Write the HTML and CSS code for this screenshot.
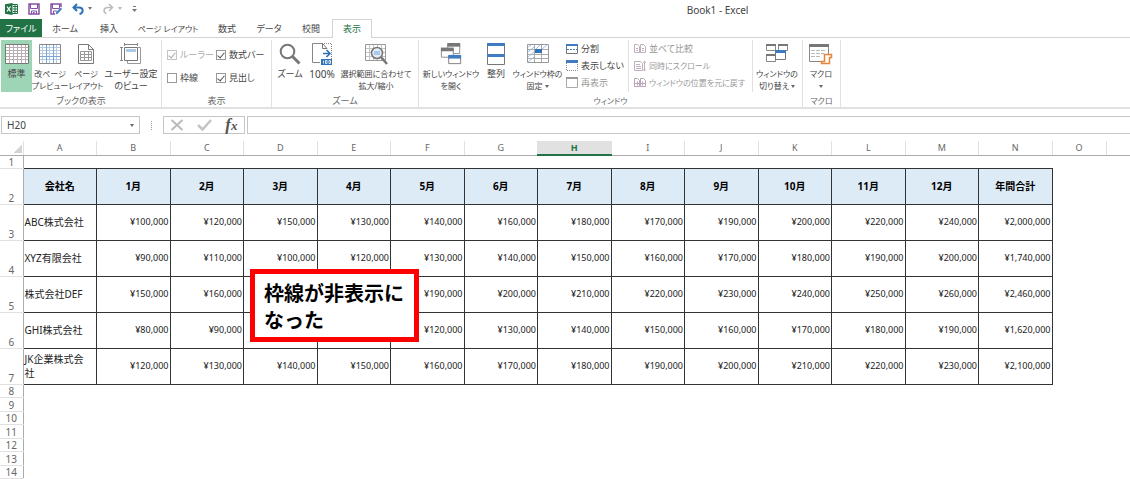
FILE: index.html
```
<!DOCTYPE html>
<html lang="ja">
<head>
    <meta charset="UTF-8">
    <meta name="viewport" content="width=device-width, initial-scale=1.0">
    <title>Book1 - Excel</title>
    <link rel="stylesheet" href="styles.css">
</head>
<body>
    <header class="titlebar">
        <div class="quick-access">
            <button type="button" class="qa-btn" aria-label="Excel">
                <svg width="13" height="12" viewBox="0 0 13 12"><path d="M6 1.500h6.500v9H6z" fill="#fff" stroke="#217346"/><path d="M8 3.500h4M8 6h4M8 8.500h4M10 2v8" stroke="#217346"/><path d="M0 1.200 7.500 0v12L0 10.800z" fill="#217346"/><path d="m2 3.500 3.500 5M5.500 3.500 2 8.500" stroke="#fff" stroke-width="1.300"/></svg>
            </button>
            <button type="button" class="qa-btn" aria-label="上書き保存">
                <svg width="12" height="12" viewBox="0 0 12 12"><path d="M1 1h10v10H1z" fill="#fff" stroke="#8650a5" stroke-width="1.500"/><path d="M2.500 1v4.500h7V1M3.500 11V8h5v3" fill="none" stroke="#8650a5"/><path d="M5 9h1.500v2H5z" fill="#8650a5"/></svg>
            </button>
            <button type="button" class="qa-btn" aria-label="名前を付けて保存">
                <svg width="12" height="12" viewBox="0 0 12 12"><path d="M11 4V1H1v10h4" fill="#fff" stroke="#8650a5" stroke-width="1.500"/><path d="M2.500 1v4.500h7V1M3.500 11V8H7" fill="none" stroke="#8650a5"/><path d="m5.500 11.500.8-2.500L11 4.500 12 6l-4.300 4.700z" fill="#3f7dc0"/></svg>
            </button>
            <button type="button" class="qa-btn undo" aria-label="元に戻す">
                <svg width="20" height="12" viewBox="0 0 20 12"><path d="M5 1 1.500 4.500 5 8M2 4.500h5c5 0 4.500 5.500.500 6.500" fill="none" stroke="#2f72b8" stroke-width="2"/><path d="M16 4h4l-2 3z" fill="#777"/></svg>
            </button>
            <button type="button" class="qa-btn redo" aria-label="やり直し">
                <svg width="20" height="12" viewBox="0 0 20 12"><path d="M7 1l3.500 3.500L7 8M10 4.500H6c-5 0-5 5-1.500 6" fill="none" stroke="#bbb" stroke-width="1.500"/><path d="M16 4h4l-2 3z" fill="#bbb"/></svg>
            </button>
            <button type="button" class="qa-btn more" aria-label="カスタマイズ">
                <svg width="5" height="6" viewBox="0 0 5 6"><path d="M1 .500h3" stroke="#777"/><path d="M0 3h5L2.500 6z" fill="#777"/></svg>
            </button>
        </div>
        <h1 class="book-title">Book1 - Excel</h1>
    </header>

    <nav class="tabs">
        <a href="#" class="tab file">ファイル</a>
        <a href="#" class="tab">ホーム</a>
        <a href="#" class="tab">挿入</a>
        <a href="#" class="tab wide tight">ページ レイアウト</a>
        <a href="#" class="tab">数式</a>
        <a href="#" class="tab">データ</a>
        <a href="#" class="tab">校閲</a>
        <a href="#" class="tab active">表示</a>
    </nav>

    <div class="ribbon">
        <section class="group views">
            <div class="tools">
                <button type="button" class="big selected">
                    <svg width="24" height="22" viewBox="0 0 24 22"><path d="M.500 1.500h23v19H.500z" fill="#fff" stroke="#777"/><path d="M4.500 2v18M8.500 2v18M12.500 2v18M16.500 2v18M20.500 2v18" stroke="#b9adb2"/><path d="M1 4.500h22M1 7.500h22M1 10.500h22M1 13.500h22M1 16.500h22" stroke="#b9adb2"/></svg>
                    <span>標準</span>
                </button>
                <button type="button" class="big tight">
                    <svg width="22" height="22" viewBox="0 0 22 22"><path d="M.500 1.500h21v19H.500z" fill="#fff" stroke="#888"/><path d="M3.500 2v18M10.500 2v18M17.500 2v18M1 4.500h20M1 7.500h20M1 10.500h20M1 16.500h20" stroke="#b4cbe5"/><path d="M7.500 2v18M14.500 2v18M1 13.500h20" stroke="#7ba6d6"/></svg>
                    <span>改ページ<br>プレビュー</span>
                </button>
                <button type="button" class="big tight">
                    <svg width="18" height="22" viewBox="0 0 18 22"><path d="M1.500 1.500h10l5 5v14h-15z" fill="#fff" stroke="#777"/><path d="M11.500 1.500v5h5" fill="none" stroke="#777"/><path d="M3.500 8.500h11v9h-11zM3.500 11.500h11M3.500 14.500h11M7.500 8.500v9M11.500 8.500v9" fill="none" stroke="#999"/></svg>
                    <span>ページ<br>レイアウト</span>
                </button>
                <button type="button" class="big wide">
                    <svg width="22" height="22" viewBox="0 0 22 22"><path d="M7.500 18v2.500h13v-16H18" fill="none" stroke="#999"/><path d="M4.500 4.500h13v13h-13z" fill="#fff" stroke="#777"/><path d="M6 6h10v3H6z" fill="#a9c8ea"/><path d="M4 1.500h14M4.500 0v3M17.500 0v3M1.500 4v14M0 4.500h3M0 17.500h3" stroke="#888"/></svg>
                    <span>ユーザー設定<br>のビュー</span>
                </button>
            </div>
            <h2 class="group-name">ブックの表示</h2>
        </section>

        <section class="group show">
            <div class="tools checks">
                <label class="check disabled"><input type="checkbox" checked disabled>ルーラー</label>
                <label class="check"><input type="checkbox" checked>数式バー</label>
                <label class="check"><input type="checkbox">枠線</label>
                <label class="check"><input type="checkbox" checked>見出し</label>
            </div>
            <h2 class="group-name">表示</h2>
        </section>

        <section class="group zoom">
            <div class="tools">
                <button type="button" class="big">
                    <svg width="22" height="22" viewBox="0 0 22 22"><circle cx="8.500" cy="8.500" r="6.800" fill="#fff" stroke="#777" stroke-width="2"/><path d="m13.500 13.500 7 7" stroke="#777" stroke-width="3"/></svg>
                    <span>ズーム</span>
                </button>
                <button type="button" class="big percent">
                    <svg width="20" height="22" viewBox="0 0 20 22"><path d="M10 .500H.500v19H8" fill="none" stroke="#888"/><path d="M10.500 0v5.500H15l-4.500-5" fill="none" stroke="#777"/><path d="M12 .500h7.500V16" fill="none" stroke="#888" stroke-dasharray="1 1"/><path d="M11 10.500h6M14.500 7l3.500 3.500-3.500 3.500" fill="none" stroke="#2f72b8" stroke-width="1.600"/><path d="M9 16h11v6H9z" fill="#2f72b8"/><path d="M11.500 17.500v3M13.500 17.500h1.500v3h-1.500zM17 17.500h1.500v3H17z" fill="none" stroke="#fff" stroke-width=".800"/></svg>
                    <span>100%</span>
                </button>
                <button type="button" class="big wide tight">
                    <svg width="24" height="22" viewBox="0 0 24 22"><path d="M1.500 1.500h20v16h-20z" fill="#fff" stroke="#999"/><path d="M5.500 2v15M9.500 2v15M13.500 2v15M17.500 2v15M2 5.500h19M2 9.500h19M2 13.500h19" stroke="#c4c4c4"/><circle cx="13" cy="10" r="5.500" fill="#e4eefa" stroke="#777" stroke-width="1.600"/><path d="M10 8h6v4h-6z" fill="#a9c8ea"/><path d="m17 14 6 7" stroke="#777" stroke-width="2.500"/></svg>
                    <span>選択範囲に合わせて<br>拡大/縮小</span>
                </button>
            </div>
            <h2 class="group-name">ズーム</h2>
        </section>

        <section class="group window">
            <div class="tools">
                <button type="button" class="big new-window tight">
                    <svg width="22" height="22" viewBox="0 0 22 24"><path d="M7.500 1.500h13v10h-13z" fill="#fff" stroke="#888"/><path d="M7 0h14v4H7z" fill="#777"/><path d="M.500 6.500h13v9H.500z" fill="#fff" stroke="#888"/><path d="M0 5h14v4H0z" fill="#777"/><path d="M8.500 14.500h13v8h-13z" fill="#fff" stroke="#777"/><path d="M8 13h14v4H8z" fill="#3f7dc0"/></svg>
                    <span>新しいウィンドウ<br>を開く</span>
                </button>
                <button type="button" class="big arrange">
                    <svg width="18" height="22" viewBox="0 0 18 22"><path d="M.500.500h17v21H.500z" fill="#fff" stroke="#777"/><path d="M0 0h18v3H0zM0 11h18v3H0z" fill="#3f7dc0"/></svg>
                    <span>整列</span>
                </button>
                <button type="button" class="big freeze tight">
                    <svg width="22" height="22" viewBox="0 0 22 22"><path d="M.500 1.500h21v18H.500z" fill="#fff" stroke="#999"/><path d="M7.500 2v17M14.500 2v17M1 6.500h20M1 11.500h20M1 15.500h20" stroke="#aaa"/><path d="m1 4 3-2M1 9l6-5M1 14l6-5M1 19l6-5M9 6l4-4M15 6l5-4" stroke="#9fc0e5"/><path d="M8 6h7v4H8z" fill="#2f72b8"/></svg>
                    <span>ウィンドウ枠の<br>固定 <i class="caret"></i></span>
                </button>
                <div class="small-list">
                    <button type="button" class="small">
                        <svg width="12" height="10" viewBox="0 0 12 10"><path d="M.500.500h11v9H.500z" fill="#fff" stroke="#777"/><path d="M0 0h12v2H0z" fill="#3f7dc0"/><path d="M1 5.500h10" stroke="#3f7dc0" stroke-dasharray="2 1"/></svg>
                        分割
                    </button>
                    <button type="button" class="small">
                        <svg width="12" height="11" viewBox="0 0 12 11"><path d="M.500 1v9.500h11V1" fill="none" stroke="#888" stroke-dasharray="1 1"/><path d="M0 0h12v3H0z" fill="#3f7dc0"/></svg>
                        表示しない
                    </button>
                    <button type="button" class="small" disabled>
                        <svg width="12" height="11" viewBox="0 0 12 11"><path d="M.500.500h11v10H.500z" fill="#fff" stroke="#aaa"/><path d="M0 0h12v2H0z" fill="#999"/></svg>
                        再表示
                    </button>
                </div>
                <div class="small-list compare">
                    <button type="button" class="small" disabled>
                        <svg width="12" height="10" viewBox="0 0 12 10"><path d="M.500.500h3l2 2v6h-5zM6.500.500h3l2 2v6h-5zM2 4.500h2M2 6.500h2M8 4.500h2M8 6.500h2" fill="none" stroke="#c0b0bd"/></svg>
                        並べて比較
                    </button>
                    <button type="button" class="small tight" disabled>
                        <svg width="12" height="12" viewBox="0 0 12 12"><path d="M.500 1.500h6l2 2v7h-8zM2 4.500h4M2 6.500h5M2 8.500h5M10.500 1v10M9.500 2.500l1-1.500 1 1.500M9.500 9.500l1 1.500 1-1.500" fill="none" stroke="#c0b0bd"/></svg>
                        同時にスクロール
                    </button>
                    <button type="button" class="small tight" disabled>
                        <svg width="12" height="10" viewBox="0 0 12 10"><path d="M.500.500h3l2 2v6h-5zM6.500.500h3l2 2v6h-5zM1 5.500h4M3.500 3.500v4M7 5.500h4M8.500 3.500v4" fill="none" stroke="#b8a4b4"/></svg>
                        ウィンドウの位置を元に戻す
                    </button>
                </div>
                <button type="button" class="big switch tight">
                    <svg width="22" height="22" viewBox="0 0 22 22"><path d="M.500 1.500h9v6h-9zM12.500 1.500h9v6h-9zM.500 11.500h9v7h-9z" fill="#fff" stroke="#888"/><path d="M0 1h10v2H0zM12 1h10v2H12zM0 11h10v2H0z" fill="#777"/><path d="M9.500 8.500h10v8h-10z" fill="#fff" stroke="#777"/><path d="M9 7h11v3H9z" fill="#3f7dc0"/></svg>
                    <span>ウィンドウの<br>切り替え <i class="caret"></i></span>
                </button>
            </div>
            <h2 class="group-name tight">ウィンドウ</h2>
        </section>

        <section class="group macro">
            <div class="tools">
                <button type="button" class="big tight">
                    <svg width="24" height="22" viewBox="0 0 24 22"><path d="M.500 1.500h19v17H.500z" fill="#fff" stroke="#888"/><path d="M0 1h20v3H0z" fill="#777"/><path d="M2 7.500h15M2 10.500h13M2 13.500h10" stroke="#bbb" stroke-dasharray="4 1"/><path d="M15.500 11.500h7v3h-2v6h-8v-2h3z" fill="#fff" stroke="#e8833a" stroke-width="1.500"/></svg>
                    <span>マクロ<br><i class="caret"></i></span>
                </button>
            </div>
            <h2 class="group-name tight">マクロ</h2>
        </section>
    </div>

    <div class="formula-bar">
        <div class="name-box">
            <input type="text" value="H20" aria-label="名前ボックス">
            <span class="caret"></span>
        </div>
        <span class="grip"></span>
        <div class="formula-buttons">
            <button type="button" aria-label="キャンセル"><svg width="14" height="12" viewBox="0 0 14 12"><path d="m1.500 1 11 10M12.500 1l-11 10" stroke="#bbb" stroke-width="2"/></svg></button>
            <button type="button" aria-label="入力"><svg width="15" height="12" viewBox="0 0 15 12"><path d="m1 6 4.500 4.500L14 1" fill="none" stroke="#c4c4c4" stroke-width="2.500"/></svg></button>
            <button type="button" class="fx" aria-label="関数の挿入">f<small>x</small></button>
        </div>
        <input type="text" class="formula" aria-label="数式バー">
    </div>

    <main class="sheet">
        <table class="grid">
            <colgroup>
                <col class="col-head">
                <col span="14">
                <col class="col-o">
                <col class="col-rest">
            </colgroup>
            <thead>
                <tr id="letters"></tr>
            </thead>
            <tbody id="rows"></tbody>
        </table>
        <div class="callout">枠線が非表示に<br>なった</div>
    </main>

    <script>
        const letters = ['', ...'ABCDEFGHIJKLMNO', ''];
        const titles = ['会社名', '1月', '2月', '3月', '4月', '5月', '6月', '7月', '8月', '9月', '10月', '11月', '12月', '年間合計'];

        // monthly sales in thousands, last value is the yearly total (null = left blank under the note)
        const companies = [
            ['ABC株式会社', 100, 120, 150, 130, 140, 160, 180, 170, 190, 200, 220, 240, 2000],
            ['XYZ有限会社', 90, 110, 100, 120, 130, 140, 150, 160, 170, 180, 190, 200, 1740],
            ['株式会社DEF', 150, 160, null, null, 190, 200, 210, 220, 230, 240, 250, 260, 2460],
            ['GHI株式会社', 80, 90, null, null, 120, 130, 140, 150, 160, 170, 180, 190, 1620],
            ['JK企業株式会<br>社', 120, 130, 140, 150, 160, 170, 180, 190, 200, 210, 220, 230, 2100]
        ];

        const yen = value => value === null ? '' : '¥' + (value * 1000).toLocaleString('en-US');

        document.getElementById('letters').innerHTML = letters.map((letter, i) => {
            const name = i === 0 ? 'corner' : letter === 'H' ? 'current' : '';
            return `<th scope="col" class="${name}">${letter}</th>`;
        }).join('');

        let html = '<tr class="first"><th scope="row">1</th><td colspan="16"></td></tr>';

        html += '<tr class="titles"><th scope="row">2</th>' +
            titles.map(title => `<td class="title">${title}</td>`).join('') + '<td></td><td></td></tr>';

        companies.forEach((company, i) => {
            const [name, ...values] = company;
            html += `<tr class="data"><th scope="row">${i + 3}</th><td class="name">${name}</td>` +
                values.map(value => `<td class="value">${yen(value)}</td>`).join('') + '<td></td><td></td></tr>';
        });

        for (let n = 8; n <= 14; n++) {
            html += `<tr class="empty"><th scope="row">${n}</th><td colspan="16"></td></tr>`;
        }

        document.getElementById('rows').innerHTML = html;
    </script>
</body>
</html>
```
FILE: styles.css
```
* {
    box-sizing: border-box;
}

body {
    margin: 0;
    background: #fff;
    color: #444;
    font-family: "Noto Sans", "Noto Sans CJK JP", sans-serif;
    font-size: 9px;
    line-height: 12px;
    font-feature-settings: "palt";
    overflow-x: hidden;
}

button {
    margin: 0;
    padding: 0;
    border: none;
    background: none;
    color: inherit;
    font: inherit;
    font-feature-settings: inherit;
    cursor: pointer;
}

button:disabled {
    color: #999;
    cursor: default;
}

h1,
h2 {
    margin: 0;
    font-size: inherit;
    font-weight: normal;
}

svg {
    display: block;
}

.caret {
    display: inline-block;
    border: 2px solid transparent;
    border-top: 3px solid #666;
    border-bottom: none;
    vertical-align: middle;
}

/* Title bar */
.titlebar {
    display: flex;
    align-items: center;
    height: 19px;
}

.quick-access {
    display: flex;
    align-items: center;
    gap: 10px;
    width: 27%;
    padding: 0 0 2px 5px;
}

.book-title {
    flex: 1;
    font-size: 10px;
    text-align: center;
}

/* Tabs */
.tabs {
    display: flex;
    height: 19px;
    border-bottom: 1px solid #d4d4d4;
}

.tab {
    width: 42px;
    line-height: 19px;
    text-align: center;
    color: #444;
    text-decoration: none;
    white-space: nowrap;
}

.tab.wide {
    width: 76px;
}

.tab:nth-child(2) {
    width: 46px;
}

.tab.file {
    background: #217346;
    color: #fff;
}

.tab.active {
    width: 40px;
    height: 19px;
    border: 1px solid #d4d4d4;
    border-bottom: none;
    background: #fff;
    color: #217346;
    line-height: 17px;
}

/* labels with a lot of kana */
.tab.tight,
.big.tight,
.small.tight,
.group-name.tight {
    font-size: 8px;
}

/* Ribbon */
.ribbon {
    display: flex;
    height: 71px;
    padding-top: 2px;
    border-bottom: 2px solid #e1e1e1;
}

.group {
    display: flex;
    flex-direction: column;
    border-right: 1px solid #e1e1e1;
}

.tools {
    display: flex;
    height: 55px;
}

.group-name {
    text-align: center;
    color: #666;
}

.views {
    width: 162px;
    padding-left: 1px;
}

.show {
    width: 110px;
}

.zoom {
    width: 147px;
}

.window {
    width: 384px;
}

.macro {
    width: 38px;
}

.big {
    display: flex;
    flex-direction: column;
    align-items: center;
    justify-content: flex-start;
    gap: 3px;
    width: 36px;
    height: 52px;
    padding-top: 3px;
    white-space: nowrap;
}

.big.selected {
    width: 31px;
    background: #9fd5b7;
}

.big.percent {
    width: 28px;
    font-size: 10px;
}

.views .wide {
    width: 54px;
}

.zoom .wide {
    width: 80px;
}

.window .new-window {
    width: 64px;
}

.window .arrange {
    width: 26px;
}

.window .freeze {
    width: 57px;
}

.window .switch {
    width: 48px;
}

.checks {
    display: grid;
    grid-template-columns: 49px 49px;
    grid-template-rows: 23px 23px;
    align-items: center;
    padding: 3px 0 0 5px;
}

.check {
    display: flex;
    align-items: center;
    gap: 3px;
    white-space: nowrap;
}

.check.disabled {
    color: #aaa;
}

.check input {
    appearance: none;
    display: grid;
    place-items: center;
    flex: none;
    width: 10px;
    height: 10px;
    margin: 0;
    border: 1px solid #999;
    background: #fff;
}

.check input:checked::before {
    content: "";
    width: 3px;
    height: 6px;
    border: solid #555;
    border-width: 0 1px 1px 0;
    transform: rotate(40deg);
}

.check input:disabled {
    border-color: #c4c4c4;
}

.check input:disabled::before {
    border-color: #aaa;
}

.small-list {
    width: 63px;
    height: 52px;
    border-right: 1px solid #e1e1e1;
}

.small-list.compare {
    width: 124px;
    padding-left: 5px;
}

.small {
    display: flex;
    align-items: center;
    gap: 3px;
    height: 17px;
    white-space: nowrap;
}

/* Formula bar */
.formula-bar {
    display: flex;
    align-items: center;
    height: 32px;
    padding-left: 1px;
}

.formula-bar input {
    border: none;
    outline: none;
    color: #444;
    font-family: inherit;
    font-size: 10px;
}

.name-box {
    display: flex;
    align-items: center;
    width: 139px;
    height: 18px;
    padding: 0 5px;
    border: 1px solid #c6c6c6;
}

.name-box input {
    flex: 1;
    min-width: 0;
    padding: 0;
}

.grip {
    width: 1px;
    height: 9px;
    margin: 0 11px;
    border-left: 1px dotted #999;
}

.formula-buttons {
    display: flex;
    align-items: center;
    justify-content: space-around;
    width: 82px;
    height: 18px;
    border: 1px solid #c6c6c6;
}

.formula-buttons .fx {
    color: #555;
    font: italic bold 17px/16px "Liberation Serif", serif;
}

.fx small {
    font-size: 13px;
}

.formula-bar .formula {
    flex: 1;
    height: 18px;
    margin-left: 2px;
    border: 1px solid #c6c6c6;
    border-right: none;
}

/* Sheet */
.sheet {
    position: relative;
}

.grid {
    width: 100%;
    border-collapse: collapse;
    table-layout: fixed;
    font-feature-settings: normal;
}

.col-head {
    width: 23px;
}

.col-o {
    width: 54px;
}

.col-rest {
    width: 24px;
}

.grid th,
.grid td {
    padding: 0;
}

.grid thead th {
    height: 14px;
    border-right: 1px solid #e1e1e1;
    border-bottom: 1px solid #ababab;
    color: #666;
    font-weight: normal;
    line-height: 12px;
}

.grid thead th:last-child {
    border-right: none;
}

.grid thead .corner {
    background: linear-gradient(135deg, transparent 50%, #d4d4d4 50%) 14px 4px / 8px 8px no-repeat;
}

.grid thead .current {
    border-bottom: 2px solid #217346;
    background: #e1e1e1;
    color: #217346;
    font-weight: bold;
}

.grid tbody th {
    border-right: 1px solid #ababab;
    border-bottom: 1px solid #e1e1e1;
    color: #666;
    font-size: 10px;
    font-weight: normal;
    line-height: 11px;
    vertical-align: bottom;
}

.grid .first {
    height: 13px;
}

.grid .titles,
.grid .data {
    height: 36px;
}

.grid .empty {
    height: 14px;
}

.grid .empty:nth-child(even) {
    height: 13px;
}

.grid .title,
.grid .name,
.grid .value {
    border: 1px solid #333;
    color: #222;
}

.grid .title {
    background: #ddebf7;
    color: #000;
    font-size: 10px;
    font-weight: bold;
    text-align: center;
}

.grid .name {
    padding-left: 1px;
    font-size: 10px;
    line-height: 14px;
    white-space: nowrap;
}

.grid .value {
    padding-right: 1px;
    text-align: right;
}

.callout {
    position: absolute;
    top: 128px;
    left: 250px;
    width: 169px;
    padding: 6px 9px 3px;
    border: 5px solid #f00;
    background: #fff;
    color: #000;
    font-size: 20px;
    font-weight: bold;
    line-height: 27px;
    font-feature-settings: normal;
    white-space: nowrap;
}
```
